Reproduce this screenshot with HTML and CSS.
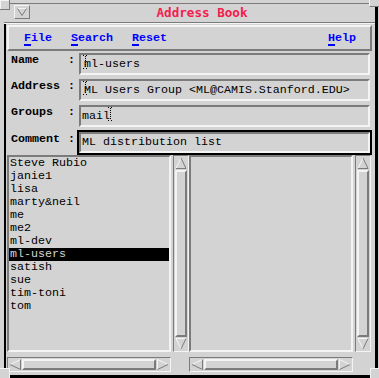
FILE: index.html
```html
<!DOCTYPE html>
<html lang="en">

<head>
    <meta charset="utf-8">
    <title>Address Book</title>
    <link rel="stylesheet" href="styles.css">
</head>

<body>
    <div class="screen">
        <div class="frame">
            <div class="titlebar">
                <div class="wm-btn">
                    <svg width="10" height="8" viewBox="0 0 10 8">
                        <path d="M0.5 0.5H9.5" stroke="#f4f4f4" />
                        <path d="M0.5 0.5L5 7.5L9.5 0.5" fill="none" stroke="#7b7b7b" />
                    </svg>
                </div>
                <div class="title">Address Book</div>
            </div>

            <div class="menubar">
                <span class="menu-item"><span class="mn">F</span>ile</span>
                <span class="menu-item"><span class="mn">S</span>earch</span>
                <span class="menu-item"><span class="mn">R</span>eset</span>
                <span class="menu-item help"><span class="mn">H</span>elp</span>
            </div>

            <div class="form">
                <div class="row">
                    <div class="label">Name</div>
                    <div class="colon">:</div>
                    <div class="field"><svg class="caret" width="5" height="14" viewBox="0 0 5 14"><path d="M0 0.5h2M3 0.5h2M2.5 1v12M0 13.5h2M3 13.5h2" stroke="#000" stroke-dasharray="1 1" /></svg>ml-users</div>
                </div>
                <div class="row">
                    <div class="label">Address</div>
                    <div class="colon">:</div>
                    <div class="field"><svg class="caret" width="5" height="14" viewBox="0 0 5 14"><path d="M0 0.5h2M3 0.5h2M2.5 1v12M0 13.5h2M3 13.5h2" stroke="#000" stroke-dasharray="1 1" /></svg>ML Users Group &lt;ML@CAMIS.Stanford.EDU&gt;</div>
                </div>
                <div class="row">
                    <div class="label">Groups</div>
                    <div class="colon">:</div>
                    <div class="field">mail<svg class="caret end" width="5" height="14" viewBox="0 0 5 14"><path d="M0 0.5h2M3 0.5h2M2.5 1v12M0 13.5h2M3 13.5h2" stroke="#000" stroke-dasharray="1 1" /></svg></div>
                </div>
                <div class="row last">
                    <div class="label">Comment</div>
                    <div class="colon">:</div>
                    <div class="field focused">ML distribution list</div>
                </div>
            </div>

            <div class="lists">
                <div class="pane">
                    <ul class="list">
                        <li>Steve Rubio</li>
                        <li>janie1</li>
                        <li>lisa</li>
                        <li>marty&amp;neil</li>
                        <li>me</li>
                        <li>me2</li>
                        <li>ml-dev</li>
                        <li class="selected">ml-users</li>
                        <li>satish</li>
                        <li>sue</li>
                        <li>tim-toni</li>
                        <li>tom</li>
                    </ul>
                    <div class="vscroll">
                        <svg class="arrow" width="12" height="12" viewBox="0 0 12 12">
                            <path d="M1 11.5L6 1" stroke="#f4f4f4" fill="none" />
                            <path d="M6 1L11 11.5H1" stroke="#7b7b7b" fill="none" />
                        </svg>
                        <div class="slider"></div>
                        <svg class="arrow" width="12" height="12" viewBox="0 0 12 12">
                            <path d="M1 0.5H11M1 0.5L6 11" stroke="#f4f4f4" fill="none" />
                            <path d="M6 11L11 0.5" stroke="#7b7b7b" fill="none" />
                        </svg>
                    </div>
                    <div class="hscroll">
                        <svg class="arrow" width="12" height="11" viewBox="0 0 12 11">
                            <path d="M11.5 0.5L1 5.5" stroke="#f4f4f4" fill="none" />
                            <path d="M1 5.5L11.5 10.5V0.5" stroke="#7b7b7b" fill="none" />
                        </svg>
                        <div class="slider"></div>
                        <svg class="arrow" width="12" height="11" viewBox="0 0 12 11">
                            <path d="M0.5 10.5V0.5L11 5.5" stroke="#f4f4f4" fill="none" />
                            <path d="M11 5.5L0.5 10.5" stroke="#7b7b7b" fill="none" />
                        </svg>
                    </div>
                </div>

                <div class="pane">
                    <ul class="list"></ul>
                    <div class="vscroll">
                        <svg class="arrow" width="12" height="12" viewBox="0 0 12 12">
                            <path d="M1 11.5L6 1" stroke="#f4f4f4" fill="none" />
                            <path d="M6 1L11 11.5H1" stroke="#7b7b7b" fill="none" />
                        </svg>
                        <div class="slider"></div>
                        <svg class="arrow" width="12" height="12" viewBox="0 0 12 12">
                            <path d="M1 0.5H11M1 0.5L6 11" stroke="#f4f4f4" fill="none" />
                            <path d="M6 11L11 0.5" stroke="#7b7b7b" fill="none" />
                        </svg>
                    </div>
                    <div class="hscroll">
                        <svg class="arrow" width="12" height="11" viewBox="0 0 12 11">
                            <path d="M11.5 0.5L1 5.5" stroke="#f4f4f4" fill="none" />
                            <path d="M1 5.5L11.5 10.5V0.5" stroke="#7b7b7b" fill="none" />
                        </svg>
                        <div class="slider"></div>
                        <svg class="arrow" width="12" height="11" viewBox="0 0 12 11">
                            <path d="M0.5 10.5V0.5L11 5.5" stroke="#f4f4f4" fill="none" />
                            <path d="M11 5.5L0.5 10.5" stroke="#7b7b7b" fill="none" />
                        </svg>
                    </div>
                </div>
            </div>
        </div>

        <!-- window manager resize corners -->
        <div class="corner tl"></div>
        <div class="corner tr"></div>
        <div class="corner bl"></div>
        <div class="corner br"></div>
    </div>
</body>

</html>
```

FILE: styles.css
```css
body {
    margin: 0;
    background-color: #d3d3d3;
    font-family: "Liberation Mono", monospace;
    font-size: 11.67px;
    color: #000;
}

.screen {
    position: relative;
    width: 379px;
    height: 378px;
    box-sizing: border-box;
    padding: 3px 1px 0 4px;
}

.frame {
    height: 100%;
    box-sizing: border-box;
    border-left: 2px solid #000;
    border-right: 3px solid #000;
    border-bottom: 3px solid #000;
    border-top: 1px solid #7b7b7b;
    display: flex;
    flex-direction: column;
}

.titlebar {
    height: 18px;
    margin-left: -2px;
    padding-left: 2px;
    background-color: #d3d3d3;
    display: flex;
    align-items: flex-start;
    border-bottom: 1px solid #7b7b7b;
    box-shadow: 0 1px 0 #f4f4f4;
}

.wm-btn {
    margin: 1px 0 0 8px;
    width: 16px;
    height: 14px;
    box-sizing: border-box;
    border: 1px solid;
    border-color: #f4f4f4 #7b7b7b #7b7b7b #f4f4f4;
    display: flex;
    align-items: center;
    justify-content: center;
}

.title {
    flex: 1;
    text-align: center;
    color: #f2204c;
    font-family: "DejaVu Sans Mono", monospace;
    font-weight: bold;
    font-size: 12.6px;
    line-height: 17px;
    padding-right: 1px;
}

.menubar {
    margin: 2px 3px 0 1px;
    height: 26px;
    box-sizing: border-box;
    border: 2px solid;
    border-color: #f4f4f4 #7b7b7b #7b7b7b #f4f4f4;
    display: flex;
    align-items: center;
    padding: 0 14px 0 15px;
}

.menu-item {
    color: #0000ff;
    font-weight: bold;
    margin-right: 19px;
}

.menu-item.help {
    margin-left: auto;
    margin-right: 0;
}

.mn {
    text-decoration: underline;
    text-decoration-thickness: 2px;
    text-underline-offset: 3px;
}

.form {
    padding-top: 1px;
}

.row {
    display: flex;
    height: 26px;
    padding-top: 1px;
    box-sizing: border-box;
}

.row.last {
    height: 25px;
    padding-top: 2px;
}

.label {
    width: 57px;
    padding-left: 5px;
    font-weight: bold;
    line-height: 14px;
}

.colon {
    width: 11px;
    font-weight: bold;
    line-height: 14px;
}

.field {
    width: 291px;
    height: 22px;
    box-sizing: border-box;
    border: 2px solid;
    border-color: #7b7b7b #f4f4f4 #f4f4f4 #7b7b7b;
    padding-left: 1px;
    line-height: 18px;
    white-space: nowrap;
}

.field.focused {
    height: 21px;
    line-height: 17px;
    outline: 2px solid #000;
}

.caret {
    vertical-align: middle;
    margin: -3px -4px 0 1px;
}

.caret.end {
    margin: -3px 0 0 -2px;
}

.lists {
    flex: 1;
    display: flex;
    padding: 0 4px 0 1px;
}

.pane {
    flex: 1;
    display: grid;
    grid-template-columns: 1fr 16px;
    grid-template-rows: 197px 15px;
    column-gap: 2px;
    row-gap: 5px;
}

.list {
    margin: 0;
    padding: 0;
    list-style: none;
    box-sizing: border-box;
    border: 2px solid;
    border-color: #7b7b7b #f4f4f4 #f4f4f4 #7b7b7b;
}

.list li {
    height: 13px;
    line-height: 13px;
    padding-left: 1px;
    white-space: nowrap;
}

.list li.selected {
    background-color: #000;
    color: #d3d3d3;
}

.vscroll {
    box-sizing: border-box;
    border: 1px solid;
    border-color: #7b7b7b #f4f4f4 #f4f4f4 #7b7b7b;
    padding: 1px;
    display: flex;
    flex-direction: column;
    align-items: center;
}

.vscroll .slider {
    flex: 1;
    align-self: stretch;
    border: 2px solid;
    border-color: #f4f4f4 #7b7b7b #7b7b7b #f4f4f4;
    margin: 1px 0;
}

.hscroll {
    box-sizing: border-box;
    border: 1px solid;
    border-color: #7b7b7b #f4f4f4 #f4f4f4 #7b7b7b;
    padding: 1px;
    display: flex;
    align-items: center;
}

.hscroll .slider {
    flex: 1;
    align-self: stretch;
    border: 2px solid;
    border-color: #f4f4f4 #7b7b7b #7b7b7b #f4f4f4;
    margin: 0 1px;
}

.arrow {
    display: block;
    flex-shrink: 0;
}

.corner {
    position: absolute;
    background-color: #d3d3d3;
}

.corner.tl {
    left: 0;
    top: 0;
    width: 9px;
    height: 9px;
    border-right: 1px solid #7b7b7b;
    border-bottom: 1px solid #7b7b7b;
    box-shadow: inset 1px 1px 0 #f4f4f4;
}

.corner.tr {
    right: 0;
    top: 0;
    width: 9px;
    height: 6px;
    border-left: 1px solid #f4f4f4;
    border-bottom: 1px solid #7b7b7b;
}

.corner.bl {
    left: 0;
    bottom: 0;
    width: 9px;
    height: 9px;
    border-top: 1px solid #f4f4f4;
    border-right: 1px solid #f4f4f4;
}

.corner.br {
    right: 0;
    bottom: 0;
    width: 8px;
    height: 9px;
    border-top: 1px solid #f4f4f4;
    border-left: 1px solid #f4f4f4;
}
```
